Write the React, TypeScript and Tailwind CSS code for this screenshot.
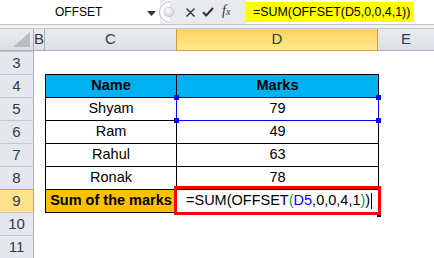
import React from "react";

const rows = [3, 4, 5, 6, 7, 8, 9, 10, 11];
const data: Record<number, [string, string]> = {
  5: ["Shyam", "79"],
  6: ["Ram", "49"],
  7: ["Rahul", "63"],
  8: ["Ronak", "78"],
};

function Corner({ pos }: { pos: string }) {
  return <div className={`absolute w-[5px] h-[5px] bg-[#0000ff] ${pos}`} />;
}

export default function App() {
  return (
    <div className="w-[434px] h-[258px] overflow-hidden bg-white font-['Liberation_Sans',Arial,sans-serif] select-none">
      {/* formula bar */}
      <div className="flex h-[24px] bg-white">
        <div className="relative w-[160px] h-full flex items-center">
          <span className="absolute left-[55px] top-[4px] text-[12px] leading-[16px] text-black">OFFSET</span>
          <svg className="absolute left-[147px] top-[11px]" width="9" height="5" viewBox="0 0 9 5">
            <path d="M0 0 L9 0 L4.5 5 Z" fill="#333" />
          </svg>
        </div>
        <div className="relative w-[86px] h-full bg-[#e8eaed] flex items-center">
          <svg className="absolute left-[-2px] top-0" width="20" height="24" viewBox="0 0 20 24">
            <path d="M12 0 L12 0 A11 11 0 0 0 1 12 A11 11 0 0 0 12 24" fill="#ffffff" />
            <path d="M12 1.5 A10.5 10.5 0 0 0 12 22.5" fill="none" stroke="#b7bcc3" strokeWidth="1" />
            <circle cx="11" cy="12" r="5" fill="url(#g1)" stroke="#c4c8ce" strokeWidth="0.8" />
            <defs>
              <radialGradient id="g1" cx="0.4" cy="0.35" r="0.7">
                <stop offset="0" stopColor="#ffffff" />
                <stop offset="1" stopColor="#c8ccd2" />
              </radialGradient>
            </defs>
          </svg>
          <svg className="absolute left-[26px] top-[8px]" width="9" height="9" viewBox="0 0 9 9">
            <path d="M1 1 L8 8 M8 1 L1 8" stroke="#3a3f46" strokeWidth="1.6" strokeLinecap="round" />
          </svg>
          <svg className="absolute left-[42px] top-[7px]" width="12" height="10" viewBox="0 0 12 10">
            <path d="M1 5.2 L4.2 8.5 L11 1" fill="none" stroke="#2e333a" strokeWidth="2" strokeLinejoin="round" />
          </svg>
          <span className="absolute left-[62px] top-[3px] font-['Liberation_Serif',serif] italic text-[14px] leading-[16px] text-[#2e333a]">
            f<span className="text-[10px]">x</span>
          </span>
        </div>
        <div className="flex-1 h-full bg-white pt-[2px]">
          <div className="w-[168px] h-[20px] bg-[#ffff00] pl-[7px] text-[12.4px] leading-[20px] text-black">
            =SUM(OFFSET(D5,0,0,4,1))
          </div>
        </div>
      </div>
      <div className="h-[5px] bg-[#f1f2f4] border-t border-b border-[#c3c7cd]" />

      {/* sheet grid */}
      <div className="grid grid-cols-[34px_11px_131px_202px_56px]">
        {/* column headers */}
        <div className="relative h-[22px] bg-gradient-to-b from-[#e9ecef] to-[#dce0e5] border-b border-r border-[#a9b0b8]">
          <svg className="absolute right-[3px] bottom-[3px]" width="17" height="15" viewBox="0 0 17 15">
            <path d="M17 0 L17 15 L0 15 Z" fill="#b8bdc3" />
          </svg>
        </div>
        <div className="h-[22px] bg-gradient-to-b from-[#e9ecef] to-[#dce0e5] border-b border-r border-[#a9b0b8] flex items-center justify-center text-[15px] text-[#2d3c50] overflow-hidden">
          B
        </div>
        <div className="h-[22px] bg-gradient-to-b from-[#e9ecef] to-[#dce0e5] border-b border-[#a9b0b8] flex items-center justify-center text-[15px] text-[#2d3c50]">
          C
        </div>
        <div className="h-[22px] bg-gradient-to-b from-[#ffd35a] to-[#ffea90] border-b border-l border-r border-[#d49a3c] flex items-center justify-center text-[15px] text-[#2d3c50]">
          D
        </div>
        <div className="h-[22px] bg-gradient-to-b from-[#e9ecef] to-[#dce0e5] border-b border-[#a9b0b8] flex items-center justify-center text-[15px] text-[#2d3c50]">
          E
        </div>

        {rows.map((r) => {
          const inTable = r >= 4 && r <= 9;
          const topLine = r >= 4 && r <= 10;
          const rowHead =
            r === 9
              ? "bg-[#ffe28b] border-[#d9a23f] border-r border-t"
              : "bg-[#e4e7eb] border-r border-t border-[#c2c7cd] border-r-[#a9b0b8]";
          const cBase = `relative h-[23px] flex items-center justify-center text-[14.5px] ${
            topLine ? "border-t border-black" : ""
          } ${inTable ? "border-l border-black" : ""}`;
          const dBase = `relative h-[23px] flex items-center text-[14.5px] ${
            topLine ? "border-t border-black" : ""
          } ${inTable ? "border-l border-black" : ""}`;
          return (
            <React.Fragment key={r}>
              <div className={`h-[23px] flex items-center justify-center text-[15px] text-[#2d3c50] ${rowHead}`}>
                {r}
              </div>
              <div className="h-[23px] bg-white" />
              {r === 4 ? (
                <div className={`${cBase} bg-[#00b0f0] font-bold text-black`}>Name</div>
              ) : r === 9 ? (
                <div className={`${cBase} bg-[#ffc000] font-bold text-black`}>Sum of the marks</div>
              ) : data[r] ? (
                <div className={`${cBase} text-black`}>{data[r][0]}</div>
              ) : (
                <div className={`${cBase}`} />
              )}
              {r === 4 ? (
                <div className={`${dBase} justify-center bg-[#00b0f0] font-bold text-black`}>Marks</div>
              ) : r === 5 ? (
                <div className={`${dBase} justify-center text-black`}>
                  79
                  <div className="absolute left-[-1px] right-[-1px] top-[-1px] bottom-[-1px] border border-[#0000ff] z-10" />
                  <Corner pos="left-[-3px] top-[-3px] z-10" />
                  <Corner pos="right-[-3px] top-[-3px] z-10" />
                  <Corner pos="left-[-3px] bottom-[-3px] z-10" />
                  <Corner pos="right-[-3px] bottom-[-3px] z-10" />
                </div>
              ) : data[r] ? (
                <div className={`${dBase} justify-center text-black`}>{data[r][1]}</div>
              ) : r === 9 ? (
                <div className={`${dBase} pl-[9px] text-black whitespace-nowrap`}>
                  <span>=SUM(OFFSET</span>
                  <span className="text-[#00a050]">(</span>
                  <span className="text-[#0000ff]">D5</span>
                  <span>,0,0,4,1</span>
                  <span className="text-[#00a050]">)</span>
                  <span>)</span>
                  <span className="inline-block w-px h-[16px] bg-black ml-[1px]" />
                  <div className="absolute left-[-3px] right-[-3px] top-[-4px] bottom-[-3px] border-[3px] border-[#ff0000] z-20" />
                  <div className="absolute right-[-3px] bottom-[-5px] w-[4px] h-[2px] bg-black z-20" />
                </div>
              ) : (
                <div className={dBase} />
              )}
              <div className={`h-[23px] bg-white ${inTable ? "border-l border-black" : ""}`} />
            </React.Fragment>
          );
        })}
      </div>
    </div>
  );
}
